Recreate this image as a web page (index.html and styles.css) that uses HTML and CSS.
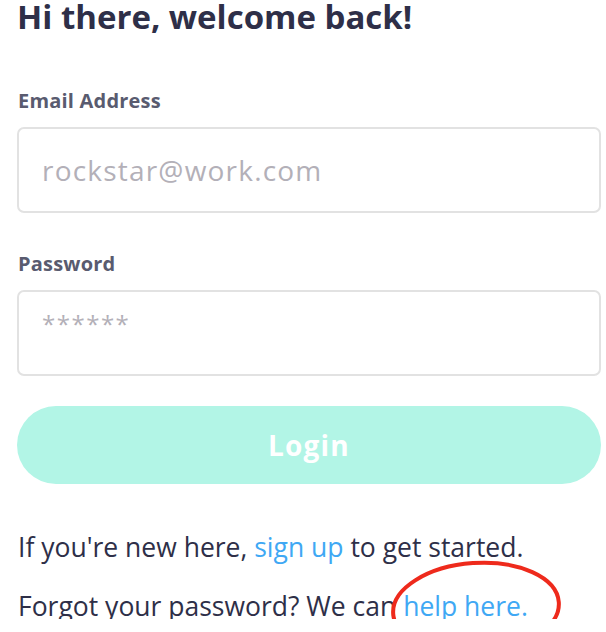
FILE: index.html
```html
<!DOCTYPE html>
<html lang="en">
<head>
  <meta charset="UTF-8" />
  <meta name="viewport" content="width=device-width, initial-scale=1" />
  <title>Login</title>
  <link rel="stylesheet" href="styles.css">
</head>
<body>
  <main class="container">
    <h1>Hi there, welcome back!</h1>

    <form class="login-form" onsubmit="return false">
      <label for="email">Email Address</label>
      <input type="email" id="email" placeholder="rockstar@work.com" />

      <label for="password">Password</label>
      <input type="password" id="password" placeholder="******" />

      <button type="submit" disabled>Login</button>
    </form>

    <p class="note">If you're new here, <a href="#">sign up</a> to get started.</p>
    <p class="note forgot">Forgot your password? We can <a href="#">help here.</a>
      <svg class="circle" width="180" height="100" viewBox="0 0 180 100">
        <ellipse cx="89" cy="52" rx="83" ry="45" transform="rotate(-4 89 52)" />
      </svg>
    </p>
  </main>
</body>
</html>
```

FILE: styles.css
```css
* { box-sizing: border-box; }
body {
  font-family: "Open Sans", Lato, sans-serif;
  background-color: #fff;
  color: #2e2f48;
  margin: 0;
  padding: 0;
  overflow: hidden;
}
.container {
  padding: 0 5px 0 17px;
}
h1 {
  margin: 0;
  font-size: 33px;
  font-weight: 700;
  line-height: 34px;
  color: #2e2f48;
}
.login-form {
  display: flex;
  flex-direction: column;
  margin-top: 56px;
}
label {
  font-size: 20px;
  font-weight: 700;
  letter-spacing: 0.2px;
  color: #595b6f;
  padding-left: 1px;
  margin-bottom: 15px;
  line-height: 22px;
}
input {
  width: 100%;
  height: 86px;
  padding: 0 23px;
  border: 2px solid #e2e2e2;
  border-radius: 7px;
  font-family: inherit;
  font-size: 28px;
  letter-spacing: 1.2px;
  color: #2e2f48;
  margin-bottom: 40px;
  outline: none;
}
input::placeholder {
  color: #b3b0b8;
}
#password {
  padding-bottom: 22px;
}
#password::placeholder {
  font-size: 24px;
  letter-spacing: 1.5px;
}
button {
  height: 78px;
  margin-top: -10px;
  border: none;
  border-radius: 39px;
  background-color: #b2f5e6;
  color: #fff;
  font-family: inherit;
  font-size: 28px;
  font-weight: 700;
  letter-spacing: 1.2px;
  cursor: pointer;
}
.note {
  margin: 50px 0 0 1px;
  font-size: 26.5px;
  line-height: 26px;
}
.forgot {
  position: relative;
  margin-top: 33px;
}
a {
  color: #3fa8f4;
  text-decoration: none;
}
.circle {
  position: absolute;
  left: 369px;
  top: -37px;
  fill: none;
  stroke: #ee2a1c;
  stroke-width: 4;
}
```
